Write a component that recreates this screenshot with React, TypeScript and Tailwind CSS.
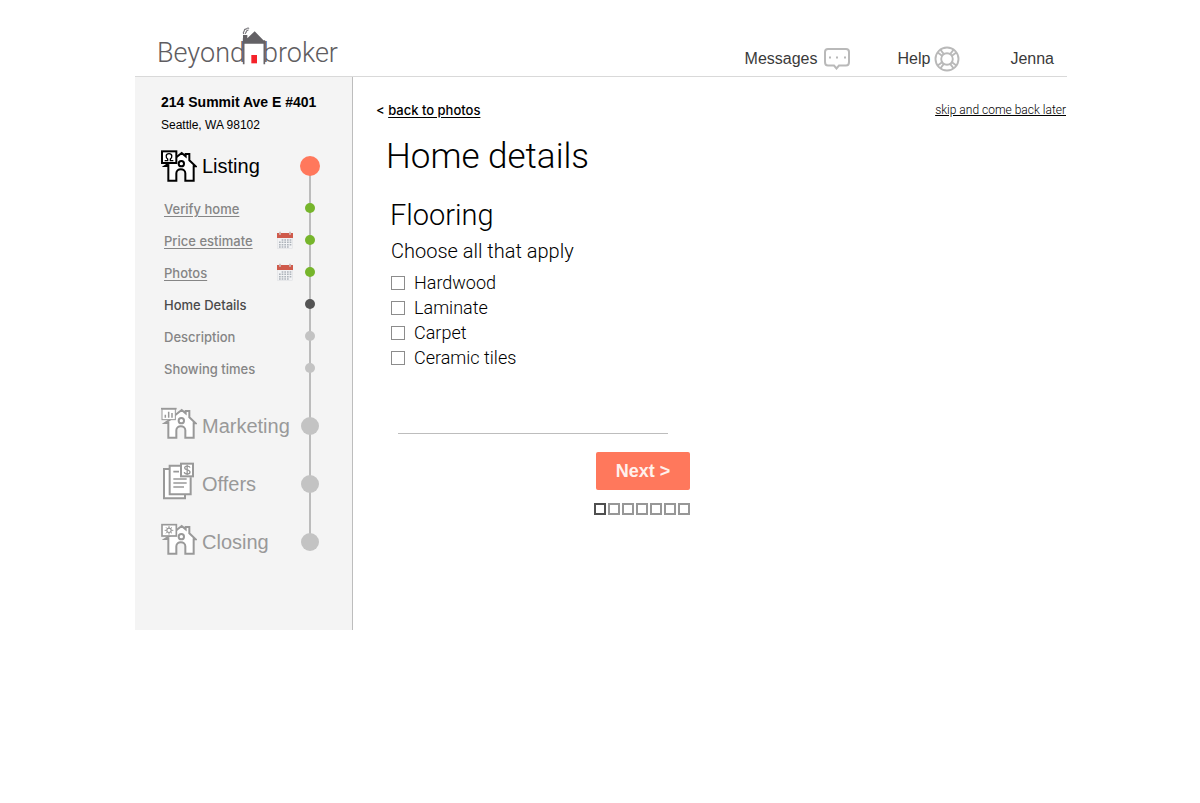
import { useState, type ReactNode } from "react";

type Status = "done" | "current" | "todo";

const steps: { label: string; status: Status; dated?: boolean }[] = [
  { label: "Verify home", status: "done" },
  { label: "Price estimate", status: "done", dated: true },
  { label: "Photos", status: "done", dated: true },
  { label: "Home Details", status: "current" },
  { label: "Description", status: "todo" },
  { label: "Showing times", status: "todo" },
];

const floorings = ["Hardwood", "Laminate", "Carpet", "Ceramic tiles"];
const pages = [1, 2, 3, 4, 5, 6, 7];

function LogoHouse() {
  return (
    <svg viewBox="0 0 72 114" className="-mx-[3px] mb-[3px] h-[38px] w-6 shrink-0" aria-hidden="true">
      <path d="M5 34 V112 M67 40 V112" stroke="#68666a" strokeWidth="5" fill="none" />
      <path d="M3 24 H16 V34 L38 13 L70 46 V50 H3 Z" fill="#636165" />
      <path
        d="M5 21 C1 15 8 14 7 10 C7 5 14 8 15 4 C17 2 20 4 21 3 M10 21 C9 17 14 17 13 13 C14 10 18 11 19 8"
        stroke="#77757a"
        strokeWidth="3.5"
        fill="none"
      />
      <rect x="28" y="84" width="17" height="25" fill="#f5222a" />
    </svg>
  );
}

function HouseIcon({ children }: { children: ReactNode }) {
  return (
    <svg viewBox="0 0 108 96" className="h-8 w-9" fill="none" stroke="currentColor" strokeWidth="6" aria-hidden="true">
      <path
        d="M44 23 L62 9 L74 19 V12 H85 V31 L104 49 H98 V92 H73 V70 C73 54 46 54 46 70 V92 H22 V48 H12 L24 40 Z"
        fill="#fff"
      />
      <circle cx="61" cy="41" r="8" />
      {children}
    </svg>
  );
}

function ListingIcon() {
  return (
    <HouseIcon>
      <rect x="3" y="4" width="43" height="35" fill="#fff" />
      <path
        d="M11 32 H20 V27 C14 23 13 11 24 11 C35 11 34 23 28 27 V32 H37"
        strokeWidth="4"
      />
    </HouseIcon>
  );
}

function MarketingIcon() {
  return (
    <HouseIcon>
      <rect x="3" y="6" width="40" height="32" fill="#fff" strokeWidth="3" />
      <path d="M0 5 H47" strokeWidth="5" />
      <path d="M13 32 V23 M23 32 V14 M33 32 V18" strokeWidth="4.5" />
    </HouseIcon>
  );
}

function ClosingIcon() {
  return (
    <HouseIcon>
      <rect x="3" y="5" width="43" height="34" fill="#fff" strokeWidth="5" />
      <circle cx="24" cy="22" r="6.5" strokeWidth="3.5" />
      <path
        d="M24 9 V15 M24 29 V35 M11 22 H17 M31 22 H37 M15 13 L19 17 M33 13 L29 17 M15 31 L19 27 M33 31 L29 27"
        strokeWidth="3"
      />
    </HouseIcon>
  );
}

function OffersIcon() {
  return (
    <svg viewBox="0 0 108 114" className="h-[38px] w-9" fill="none" stroke="currentColor" strokeWidth="6" aria-hidden="true">
      <path d="M24 21 H9 V109 H72 V98" fill="#fff" />
      <path d="M58 11 H26 V97 H89 V46" fill="#fff" />
      <rect x="60" y="5" width="36" height="38" fill="#fff" />
      <path d="M37 29 H54 M37 51 H77 M37 63 H77 M37 75 H69" strokeWidth="5" />
      <path
        d="M87 17 C85 10 71 11 71 18 C71 25 87 22 87 30 C87 38 71 38 70 30 M78.500 8 V39"
        strokeWidth="4"
      />
    </svg>
  );
}

function CalendarIcon() {
  return (
    <svg viewBox="0 0 48 54" className="h-[18px] w-4" aria-label="Scheduled" role="img">
      <rect x="1" y="15" width="46" height="38" fill="#f1f2f4" stroke="#dcdde0" strokeWidth="1.500" />
      <path d="M0 6 H48 V21 H0 Z" fill="#cf5a4b" />
      <path d="M9 3 V11 M39 3 V11" stroke="#e9d5d2" strokeWidth="5" />
      <path d="M9 2 V11 M39 2 V11" stroke="#a58b88" strokeWidth="2" />
      <path
        d="M14 27 H43 M6 34 H43 M6 41 H43 M6 48 H36"
        stroke="#adb3ba"
        strokeWidth="4.500"
        strokeDasharray="5 3"
      />
    </svg>
  );
}

function ChatIcon() {
  return (
    <svg viewBox="0 0 26 22" className="h-[22px] w-[26px]" aria-hidden="true">
      <path
        d="M4 1 H22 C24 1 25 2 25 4 V14 C25 16 24 17.500 22 17.500 H15 L12.500 20.500 L10 17.500 H4 C2 17.500 1 16 1 14 V4 C1 2 2 1 4 1 Z"
        fill="none"
        stroke="#b9b9b9"
        strokeWidth="2"
      />
      <path d="M5 9.500 H7 M12 9.500 H14 M20 9.500 H22" stroke="#b9b9b9" strokeWidth="1.800" />
    </svg>
  );
}

function LifebuoyIcon() {
  return (
    <svg viewBox="0 0 26 26" className="h-[26px] w-[26px]" fill="none" stroke="#b9b9b9" strokeWidth="1.900" aria-hidden="true">
      <circle cx="13" cy="13" r="11.500" />
      <circle cx="13" cy="13" r="5.800" />
      <path d="M6.500 3.700 L10 8.400 M3.700 6.500 L8.400 10 M19.500 3.700 L16 8.400 M22.300 6.500 L17.600 10 M6.500 22.300 L10 17.600 M3.700 19.500 L8.400 16 M19.500 22.300 L16 17.600 M22.300 19.500 L17.600 16" />
    </svg>
  );
}

const dotColors: Record<Status, string> = {
  done: "bg-[#76b52b]",
  current: "bg-[#545454]",
  todo: "bg-[#c3c3c3]",
};

function StepRow({ label, status, dated }: { label: string; status: Status; dated?: boolean }) {
  return (
    <li className="flex h-8 items-center pr-[5px] pl-[3px] font-['Inter',sans-serif] text-[13px] leading-5 font-medium">
      {status === "done" ? (
        <a href="#step" className="pt-[2px] text-[#858585] underline underline-offset-2">
          {label}
        </a>
      ) : (
        <span className={status === "current" ? "pt-[2px] text-[#4a4a4a]" : "pt-[2px] text-[#858585]"}>
          {label}
        </span>
      )}
      <span className="ml-auto flex items-center gap-3">
        {dated && <CalendarIcon />}
        <span className={`size-[10px] rounded-full ${dotColors[status]}`} />
      </span>
    </li>
  );
}

function Phase({ icon, label }: { icon: ReactNode; label: string }) {
  return (
    <li className="flex h-[58px] items-center pr-px text-[#999999]">
      <span className="flex w-9 shrink-0 justify-center pb-[6px]">{icon}</span>
      <span className="ml-[5px] text-[20px]">{label}</span>
      <span className="ml-auto size-[18px] shrink-0 rounded-full bg-[#c3c3c3]" />
    </li>
  );
}

export default function App() {
  const [chosen, setChosen] = useState<string[]>([]);
  const toggle = (name: string) =>
    setChosen((c) => (c.includes(name) ? c.filter((n) => n !== name) : [...c, name]));

  return (
    <div className="min-h-screen bg-white pr-[133px] pl-[135px] font-['Liberation_Sans',Arial,sans-serif] text-black">
      <header className="flex h-[77px] items-end justify-between border-b border-[#d9d9d9] pr-[13px] pl-[22px]">
        <a
          href="#home"
          className="flex items-end pb-2 font-['Roboto',sans-serif] text-[27px] leading-[30px] font-light text-[#5f5d61]"
        >
          <span>Beyond</span>
          <LogoHouse />
          <span>broker</span>
        </a>
        <nav className="flex items-center pb-1 text-[16px] text-[#3a3a3a]">
          <a href="#messages" className="mr-12 flex items-center gap-[6px]">
            Messages <ChatIcon />
          </a>
          <a href="#help" className="mr-[50px] flex items-center gap-1">
            Help <LifebuoyIcon />
          </a>
          <a href="#account">Jenna</a>
        </nav>
      </header>

      <div className="flex items-start">
        <aside className="w-[218px] shrink-0 border-r border-[#bdbdbd] bg-[#f4f4f4] pt-[13px] pr-[32px] pb-[59px] pl-[26px]">
          <address className="pb-1 whitespace-nowrap not-italic">
            <div className="text-[14px] leading-6 font-bold">214 Summit Ave E #401</div>
            <div className="text-[12px] leading-[22px]">Seattle, WA 98102</div>
          </address>
          <div className="relative">
            <div className="absolute top-[26px] right-[9px] bottom-[29px] w-[2px] bg-[#bcbcbc]" />
            <ol className="relative">
              <li>
                <div className="flex h-[52px] items-center">
                  <ListingIcon />
                  <span className="ml-[5px] text-[20px]">Listing</span>
                  <span className="ml-auto size-5 rounded-full bg-[#ff785c]" />
                </div>
                <ol className="mb-[13px]">
                  {steps.map((s) => (
                    <StepRow key={s.label} {...s} />
                  ))}
                </ol>
              </li>
              <Phase icon={<MarketingIcon />} label="Marketing" />
              <Phase icon={<OffersIcon />} label="Offers" />
              <Phase icon={<ClosingIcon />} label="Closing" />
            </ol>
          </div>
        </aside>

        <main className="grow pt-[23px] pl-[23px]">
          <div className="flex items-center justify-between leading-5">
            <div className="font-['Inter',sans-serif] text-[13px] font-medium">
              &lt;{" "}
              <a href="#photos" className="underline underline-offset-2">
                back to photos
              </a>
            </div>
            <a href="#later" className="mr-px font-['Roboto',sans-serif] text-[12px] font-light underline">
              skip and come back later
            </a>
          </div>
          <form
            className="mt-[15px] ml-[15px] max-w-[299px] font-['Roboto',sans-serif] font-light"
            onSubmit={(e) => e.preventDefault()}
          >
            <h1 className="-ml-[5px] text-[35px] leading-[44px]">Home details</h1>
            <h2 className="-ml-px mt-[18px] text-[29px] leading-9">Flooring</h2>
            <fieldset className="mt-1">
              <legend className="text-[20px] leading-7">Choose all that apply</legend>
              <div className="mt-[5px]">
                {floorings.map((name) => (
                  <label key={name} className="flex h-[25px] items-center gap-[9px] text-[18px]">
                    <input
                      type="checkbox"
                      checked={chosen.includes(name)}
                      onChange={() => toggle(name)}
                      className="size-[14px] appearance-none border border-[#8c8c8c] bg-white checked:bg-[#545454]"
                    />
                    {name}
                  </label>
                ))}
              </div>
            </fieldset>
            <hr className="mt-[63px] mr-[22px] ml-[7px] border-[#bdbdbd]" />
            <div className="mt-[18px] flex flex-col items-end gap-[13px]">
              <button
                type="submit"
                className="h-[38px] w-[94px] rounded-[2px] bg-[#ff785c] font-['Liberation_Sans',Arial,sans-serif] text-[18px] font-bold text-[#fff1ec]"
              >
                Next &gt;
              </button>
              <div className="flex gap-[2px]">
                {pages.map((p) => (
                  <button
                    key={p}
                    type="button"
                    aria-label={`Page ${p}`}
                    className={
                      p === 1 ? "size-3 border-2 border-[#4f4f4f]" : "size-3 border-2 border-[#979797]"
                    }
                  />
                ))}
              </div>
            </div>
          </form>
        </main>
      </div>
    </div>
  );
}
